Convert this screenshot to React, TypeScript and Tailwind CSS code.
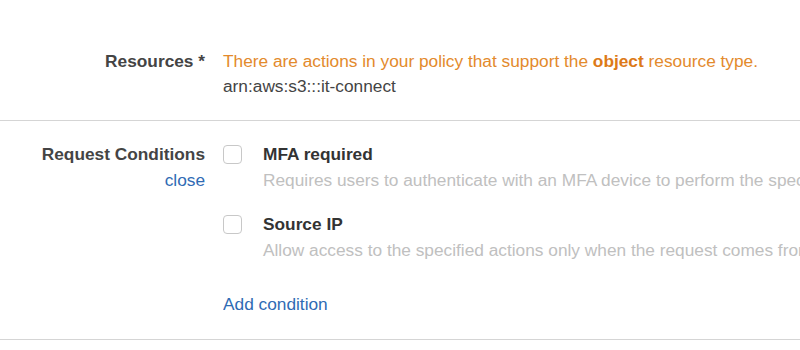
export default function App() {
  return (
    <div className="w-[800px] h-[350px] overflow-hidden bg-white font-['Liberation_Sans',Arial,sans-serif] text-[17.3px] leading-[25px]">
      {/* Resources */}
      <div className="flex gap-[18px] pt-[49px] pb-[21px] border-b border-[#d5d5d5]">
        <div className="w-[205px] shrink-0 text-right font-bold text-[#444]">Resources *</div>
        <div>
          <div className="text-[#e38a2c] whitespace-nowrap">
            There are actions in your policy that support the{' '}
            <span className="font-bold text-[#dd7a18]">object</span> resource type.
          </div>
          <div className="text-[#444]">arn:aws:s3:::it-connect</div>
        </div>
      </div>

      {/* Request conditions */}
      <div className="flex gap-[18px] pt-[20px] pb-[22px] border-b border-[#d5d5d5] leading-[26px]">
        <div className="w-[205px] shrink-0 text-right">
          <div className="font-bold text-[#444]">Request Conditions</div>
          <a className="text-[#2f6bb4]">close</a>
        </div>
        <div className="flex flex-col min-w-0 overflow-hidden">
          <Condition
            title="MFA required"
            desc="Requires users to authenticate with an MFA device to perform the specified actions."
          />
          <div className="mt-[18px]">
            <Condition
              title="Source IP"
              desc="Allow access to the specified actions only when the request comes from a specified IP address range."
            />
          </div>
          <a className="mt-[28px] text-[#2f6bb4]">Add condition</a>
        </div>
      </div>
    </div>
  );
}

function Condition({ title, desc }: { title: string; desc: string }) {
  return (
    <div className="flex gap-[21px]">
      <div className="pt-[4px] shrink-0">
        <div className="w-[19px] h-[19px] rounded-[4px] border border-[#c8c8c8] bg-white" />
      </div>
      <div className="whitespace-nowrap">
        <div className="font-bold text-[#333]">{title}</div>
        <div className="text-[#c0c0c0]">{desc}</div>
      </div>
    </div>
  );
}
